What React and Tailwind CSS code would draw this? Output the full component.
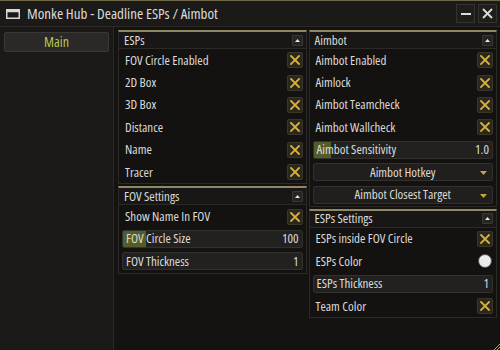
import React from 'react';

function Check() {
  return (
    <div className="w-4 h-4 flex items-center justify-center bg-[#2a2720] border border-[#3b3728] rounded-[2px]">
      <svg width="10" height="10" viewBox="0 0 10 10">
        <path d="M1 1L9 9M9 1L1 9" stroke="#d6b23c" strokeWidth="1.8" strokeLinecap="square" />
      </svg>
    </div>
  );
}

function Collapse() {
  return (
    <div className="w-[11px] h-[11px] flex items-center justify-center bg-[#262523] border border-[#393835] rounded-[1px]">
      <svg width="5" height="3" viewBox="0 0 5 3"><path d="M0 3L2.5 0L5 3Z" fill="#e6e6e6" /></svg>
    </div>
  );
}

function Toggle({ label }) {
  return (
    <div className="h-[22.4px] flex items-center justify-between pl-[6px] pr-[3px]">
      <span>{label}</span>
      <Check />
    </div>
  );
}

function Slider({ label, value, fill }) {
  return (
    <div className="h-[22.4px] flex items-center px-[3px]">
      <div className="relative w-full h-[18px] flex items-center justify-between px-[3px] bg-[#222120] border border-[#32312e] rounded-[2px] overflow-hidden">
        <div className="absolute left-0 top-0 bottom-0 bg-[#535d27]" style={{ width: fill }} />
        <span className="relative">{label}</span>
        <span className="relative">{value}</span>
      </div>
    </div>
  );
}

function Dropdown({ label }) {
  return (
    <div className="h-[22.4px] flex items-center px-[3px]">
      <div className="relative w-full h-[18px] flex items-center justify-center bg-[#201f1d] border border-[#32312e] rounded-[2px]">
        <span>{label}</span>
        <svg className="absolute right-[5px] top-[7px]" width="7" height="4" viewBox="0 0 7 4"><path d="M0 0H7L3.5 4Z" fill="#c9a53a" /></svg>
      </div>
    </div>
  );
}

function Section({ title, children }) {
  return (
    <div className="border border-[#2c2a27] border-t-2 border-t-[#8f8862] bg-[#131211]">
      <div className="h-[17px] flex items-center justify-between pl-[5px] pr-[3px] border-b border-[#2c2a27] bg-[#181715]">
        <span>{title}</span>
        <Collapse />
      </div>
      <div>{children}</div>
    </div>
  );
}

export default function App() {
  return (
    <div className="relative w-[500px] h-[350px] flex flex-col bg-[#141312] border-t border-[#6e6846] text-[13px] leading-none text-[#dadada] font-['Open_Sans',sans-serif] font-stretch-[75%] overflow-hidden">
      <div className="h-[26px] flex items-center pl-[6px] pr-[3px] border-b border-[#2b2a27] bg-[#1b1a18]">
        <svg width="14" height="10" viewBox="0 0 14 10" className="mr-[7px]">
          <rect x="0.75" y="0.75" width="12.5" height="8.5" fill="none" stroke="#d8d8d8" strokeWidth="1.5" />
          <rect x="0.75" y="0.75" width="12.5" height="2.5" fill="#d8d8d8" />
        </svg>
        <span className="text-[15px]">Monke Hub - Deadline ESPs / Aimbot</span>
        <div className="ml-auto flex gap-[3px]">
          <div className="w-[19px] h-[19px] flex items-center justify-center bg-[#1f1e1c] border border-[#34332f]">
            <svg width="10" height="10" viewBox="0 0 10 10"><path d="M0 5H10" stroke="#dcdcdc" strokeWidth="2" /></svg>
          </div>
          <div className="w-[19px] h-[19px] flex items-center justify-center bg-[#1f1e1c] border border-[#34332f]">
            <svg width="11" height="11" viewBox="0 0 11 11"><path d="M1 1L10 10M10 1L1 10" stroke="#dcdcdc" strokeWidth="1.8" /></svg>
          </div>
        </div>
      </div>

      <div className="flex flex-1">
        <div className="w-[114px] border-r border-[#2a2927] bg-[#1a1918] px-[4px] pt-[5px]">
          <div className="h-[20px] flex items-center justify-center bg-[#2a2927] border border-[#3a3936] rounded-[2px] text-[14px] text-[#bcc550]">
            Main
          </div>
        </div>

        <div className="flex-1 flex gap-[2px] pl-[4px] pr-[3px] pt-[3px]">
          <div className="flex-1 flex flex-col gap-[2px]">
            <Section title="ESPs">
              <Toggle label="FOV Circle Enabled" />
              <Toggle label="2D Box" />
              <Toggle label="3D Box" />
              <Toggle label="Distance" />
              <Toggle label="Name" />
              <Toggle label="Tracer" />
            </Section>
            <Section title="FOV Settings">
              <Toggle label="Show Name In FOV" />
              <Slider label="FOV Circle Size" value="100" fill={23} />
              <Slider label="FOV Thickness" value="1" fill={0} />
            </Section>
          </div>

          <div className="flex-1 flex flex-col gap-[2px]">
            <Section title="Aimbot">
              <Toggle label="Aimbot Enabled" />
              <Toggle label="Aimlock" />
              <Toggle label="Aimbot Teamcheck" />
              <Toggle label="Aimbot Wallcheck" />
              <Slider label="Aimbot Sensitivity" value="1.0" fill={17} />
              <Dropdown label="Aimbot Hotkey" />
              <Dropdown label="Aimbot Closest Target" />
            </Section>
            <Section title="ESPs Settings">
              <Toggle label="ESPs inside FOV Circle" />
              <div className="h-[22.4px] flex items-center justify-between pl-[6px] pr-[4px]">
                <span>ESPs Color</span>
                <div className="w-[14px] h-[14px] rounded-full bg-[#ececec] border border-[#4a4a48]" />
              </div>
              <Slider label="ESPs Thickness" value="1" fill={0} />
              <Toggle label="Team Color" />
            </Section>
          </div>
        </div>
      </div>

      <svg className="absolute right-0 bottom-0" width="7" height="7" viewBox="0 0 7 7">
        <path d="M7 1L1 7M7 4L4 7" stroke="#b7a84e" strokeWidth="1" />
      </svg>
    </div>
  );
}
